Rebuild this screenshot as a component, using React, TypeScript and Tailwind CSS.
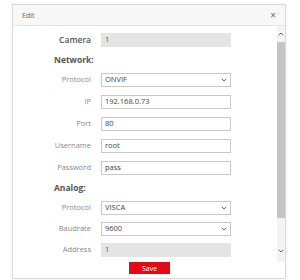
import React from 'react';

const font = { fontFamily: '"Open Sans", "Liberation Sans", sans-serif' };

function Chevron({ up = false }: { up?: boolean }) {
  return (
    <svg width="6" height="4" viewBox="0 0 6 4" className="block">
      <path
        d={up ? 'M0.8 3.2 L3 1 L5.2 3.2' : 'M0.8 0.8 L3 3 L5.2 0.8'}
        fill="none"
        stroke="#666"
        strokeWidth="1"
      />
    </svg>
  );
}

function Row({ label, children, className = '' }: { label: string; children: React.ReactNode; className?: string }) {
  return (
    <div className={`flex items-center h-[14px] gap-[10px] ${className}`}>
      <div className="w-[78px] text-right text-[7.5px] text-[#888] leading-none">{label}</div>
      {children}
    </div>
  );
}

function TextBox({ value }: { value: string }) {
  return (
    <div className="w-[130px] h-[14px] border border-[#c9c9c9] bg-white flex items-center px-[3px] text-[7.5px] text-[#444] leading-none">
      {value}
    </div>
  );
}

function ReadOnly({ value }: { value: string }) {
  return (
    <div className="w-[130px] h-[14px] bg-[#e4e4e4] flex items-center px-[4px] text-[7.5px] text-[#555] leading-none">
      {value}
    </div>
  );
}

function Select({ value }: { value: string }) {
  return (
    <div className="w-[130px] h-[14px] border border-[#c9c9c9] bg-white flex items-center justify-between pl-[3px] pr-[3px] text-[7.5px] text-[#444] leading-none">
      <span>{value}</span>
      <Chevron />
    </div>
  );
}

function Heading({ text }: { text: string }) {
  return (
    <div className="h-[26px] flex items-center pl-[41px] text-[8.5px] font-bold text-[#555] leading-none">
      {text}
    </div>
  );
}

export default function App() {
  return (
    <div className="w-[300px] h-[280px] bg-white pt-[4px] pl-[12px]" style={font}>
      <div className="w-[274px] h-[275px] border border-[#dadada] flex flex-col shadow-[0_0_3px_rgba(0,0,0,0.08)]">
        {/* Header */}
        <div className="h-[21px] shrink-0 bg-[#f7f7f7] border-b border-[#e6e6e6] flex items-center justify-between pl-[9px] pr-[9px]">
          <span className="text-[7px] text-[#666] leading-none">Edit</span>
          <span className="text-[10px] text-[#666] leading-none">×</span>
        </div>

        {/* Body */}
        <div className="h-[236px] shrink-0 flex">
          <div className="flex-1 pt-[7px]">
            <div className="flex items-center h-[14px] gap-[10px]">
              <div className="w-[78px] text-right text-[8.5px] font-semibold text-[#555] leading-none">Camera</div>
              <ReadOnly value="1" />
            </div>

            <Heading text="Network:" />
            <div className="flex flex-col gap-[8px]">
              <Row label="Protocol">
                <Select value="ONVIF" />
              </Row>
              <Row label="IP">
                <TextBox value="192.168.0.73" />
              </Row>
              <Row label="Port">
                <TextBox value="80" />
              </Row>
              <Row label="Username">
                <TextBox value="root" />
              </Row>
              <Row label="Password">
                <TextBox value="pass" />
              </Row>
            </div>

            <Heading text="Analog:" />
            <div className="flex flex-col gap-[7px]">
              <Row label="Protocol">
                <Select value="VISCA" />
              </Row>
              <Row label="Baudrate">
                <Select value="9600" />
              </Row>
              <Row label="Address">
                <ReadOnly value="1" />
              </Row>
            </div>
          </div>

          {/* Scrollbar */}
          <div className="w-[8px] bg-[#f3f3f3] flex flex-col items-center">
            <div className="h-[16px] flex items-center justify-center">
              <Chevron up />
            </div>
            <div className="w-[8px] h-[176px] bg-[#c4c4c4]" />
            <div className="flex-1" />
            <div className="h-[22px] flex items-center justify-center">
              <Chevron />
            </div>
          </div>
        </div>

        {/* Footer */}
        <div className="flex-1 flex justify-center pl-[1px]">
          <button className="w-[41px] h-[12px] bg-[#e50914] text-white text-[7px] leading-none flex items-center justify-center">
            Save
          </button>
        </div>
      </div>
    </div>
  );
}
